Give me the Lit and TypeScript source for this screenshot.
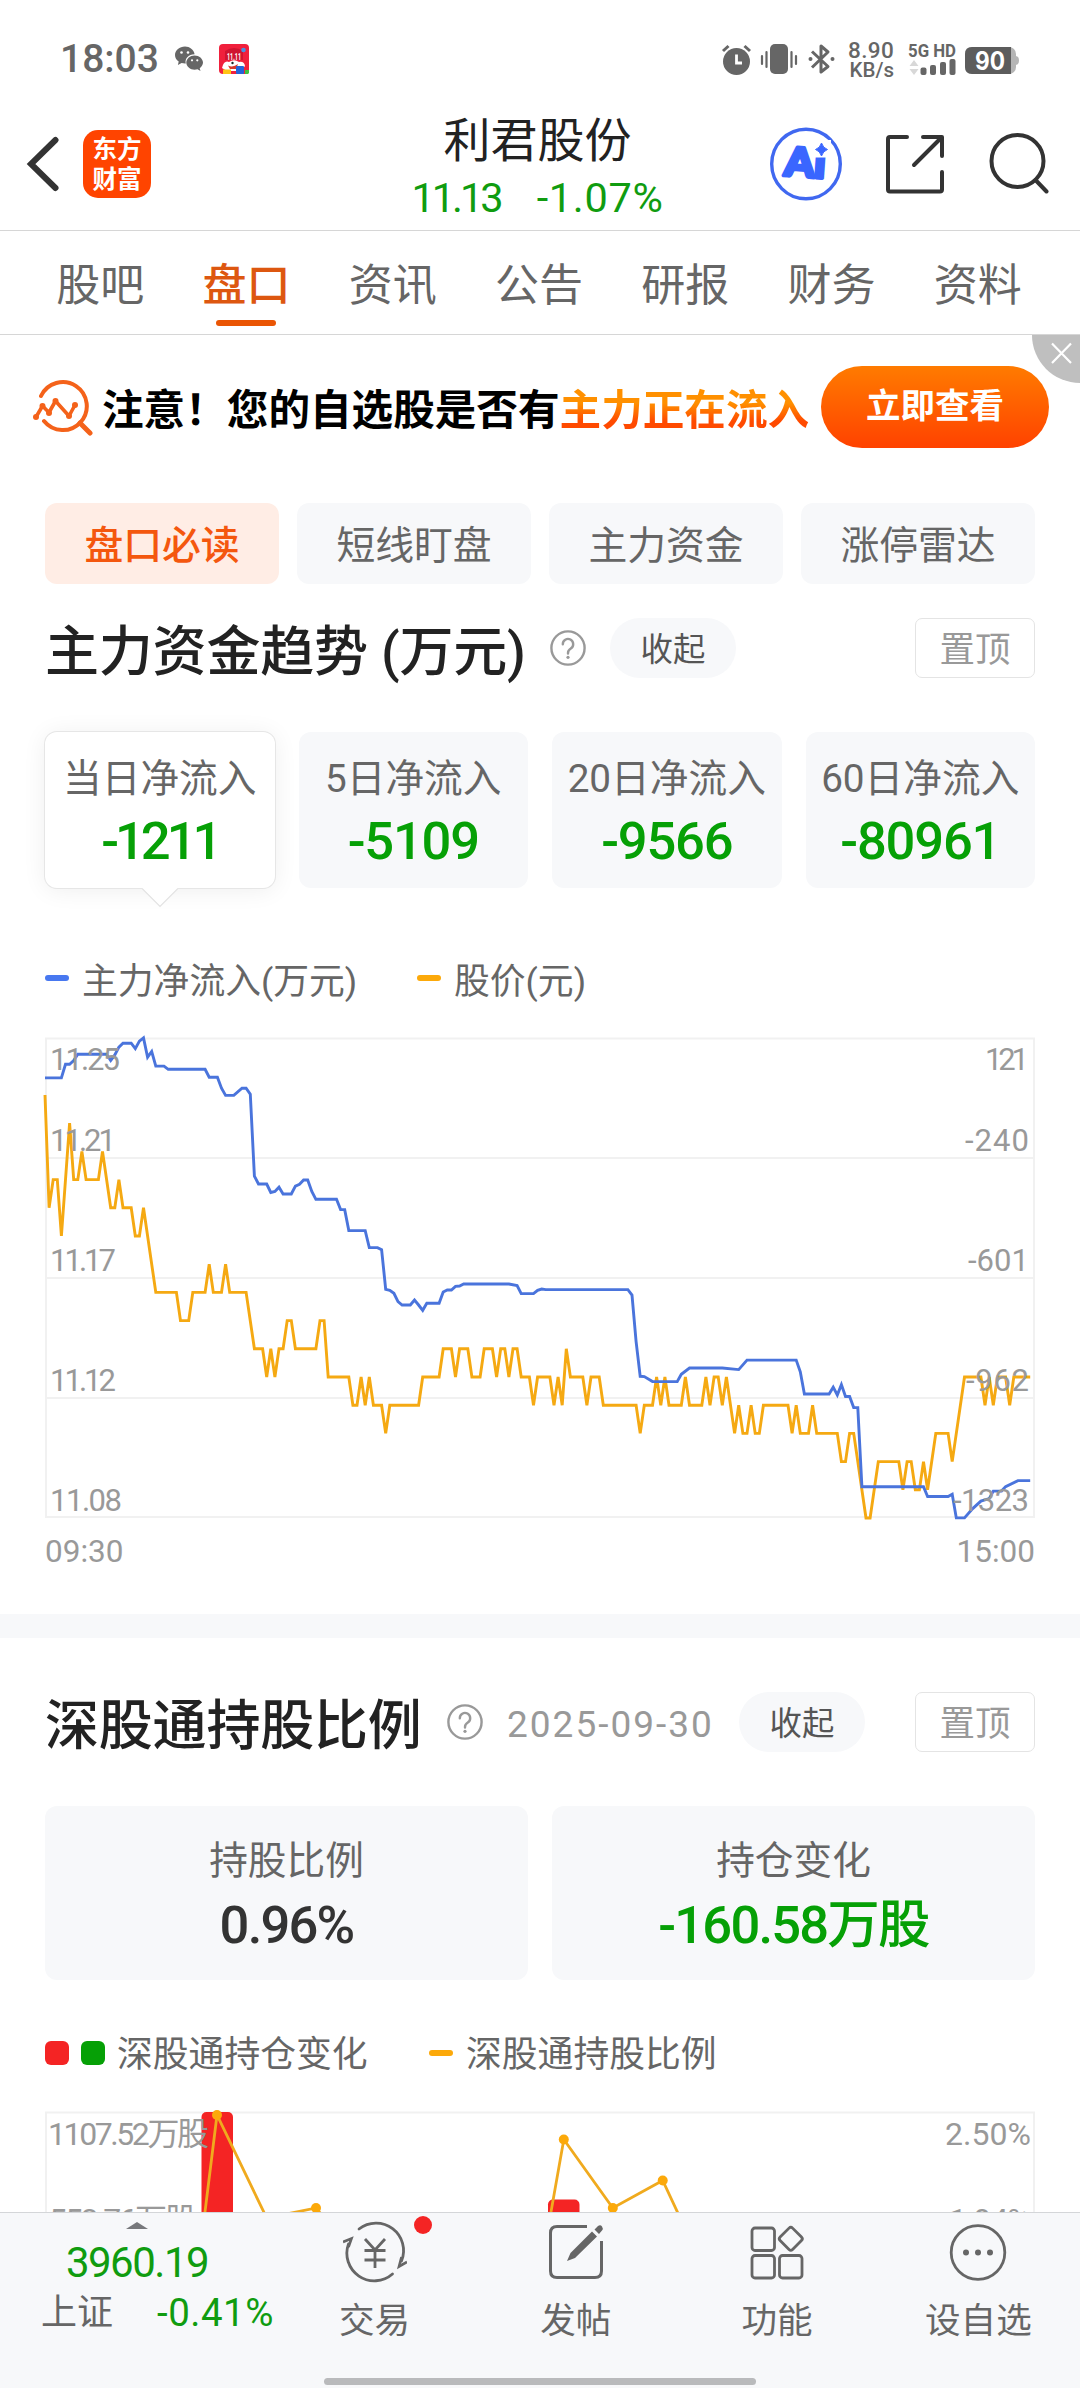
import { LitElement, html, svg, css } from "lit";
import { customElement } from "lit/decorators.js";
import { classMap } from "lit/directives/class-map.js";

/** [minute index, steps of 0.01 below 11.23] */
const PRICE: number[][] = [
  [0,0],[1,4],[2,3],[3,3],[4,5],[6,1],[7,3],[8,3],[9,2],[10,3],[13,3],[14,2],[16,4],[17,4],[18,3],[19,4],[21,4],[22,5],[23,5],[24,4],
  [27,7],[32,7],[33,8],[35,8],[36,7],[39,7],[40,6],[41,7],[43,7],[44,6],[45,7],[49,7],[51,9],[53,9],[54,10],[55,9],[56,10],[57,9],
  [58,9],[59,8],[60,8],[61,9],[66,9],[67,8],[68,8],[69,10],[74,10],[75,11],[76,11],[77,10],[78,11],[79,10],[80,11],[82,11],[83,12],
  [84,11],[91,11],[92,10],[96,10],[97,9],[99,9],[100,10],[101,9],[103,9],[104,10],[106,10],[107,9],[109,9],[110,10],[111,9],[112,9],
  [113,10],[114,9],[115,9],[116,10],[118,10],[119,11],[120,10],[123,10],[124,11],[125,10],[126,11],[127,9],[128,10],[131,10],
  [132,11],[133,10],[135,10],[136,11],[144,11],[145,12],[146,11],[148,11],[149,10],[150,11],[151,10],[152,11],[155,11],[156,10],
  [157,11],[160,11],[161,10],[162,11],[163,10],[164,10],[165,11],[166,10],[168,12],[169,11],[170,12],[171,12],[172,11],[173,12],
  [174,12],[175,11],[181,11],[182,12],[183,11],[184,12],[186,12],[187,11],[188,12],[193,12],[194,13],[195,13],[196,12],[197,12],
  [200,15],[201,15],[203,13],[208,13],[209,14],[210,13],[211,13],[212,14],[213,14],[214,13],[215,14],[217,12],[220,12],[221,13],
  [224,10],[228,10],[229,11],[230,10],[231,11],[232,10],[234,10],[235,11],[236,10],[240,10],
];

/** [minute index, distance below the top of the plot] */
const INFLOW: number[][] = [
  [0,39.3],[4,39.3],[5,25.7],[6,25.7],[7,22],[8,15.7],[15,15.7],[16,21.8],[17,16.4],[18,8.6],[19,4.6],[21,4.6],[22,10],[23,2.5],
  [24,-0.7],[25,18.6],[26,12.9],[27,27.5],[29,27.5],[30,30.7],[39,30.7],[40,38.6],[42,38.6],[43,49.6],[44,56.8],[46,56.8],[48,49.6],
  [49,49.6],[50,55.7],[51,137.5],[52,145.4],[54,145.4],[55,153.9],[56,152.9],[57,148.6],[58,155.4],[60,155.4],[61,147.5],[62,145.7],
  [63,141.4],[64,141.4],[65,152.9],[66,160.7],[71,160.7],[72,171],[73,171],[74,192],[78,192],[79,209],[81,209],[82,211],[83,250.7],
  [84,251.7],[85,254.7],[86,263],[87,266.4],[89,266.4],[90,261.4],[91,266.4],[92,271.7],[93,264.7],[96,264.7],[97,253.4],[98,251.4],
  [99,251.4],[100,247.7],[101,247.4],[102,245.4],[113,245.4],[115,247],[116,255],[119,255],[120,251.7],[121,250.4],[122,251],
  [142,251],[143,256.4],[144,303],[145,337.7],[146,338],[148,343],[154,343],[155,335.7],[157,329.4],[165,329.4],[169,331],
  [171,321.5],[183,321.5],[184,333.2],[185,355.4],[191,355.4],[192,348.6],[193,356.4],[194,346],[195,357.9],[196,357.9],[197,369],
  [198,369],[199,448.2],[214,448.2],[215,457.9],[220,457.9],[221,455.7],[222,479.3],[224,479.3],[226,470],[228,462.5],[230,460],
  [231,452.5],[233,452.5],[234,448],[237,442],[240,442],
];

const TOP = 5.6;
const line = (data: number[][], y: (v: number) => number) =>
  data.map(([i, v]) => `${(i * 4.105).toFixed(1)},${y(v).toFixed(1)}`).join(" ");

@customElement("flow-chart")
class FlowChart extends LitElement {
  static styles = css`
    :host { display: block; }
    svg { display: block; overflow: visible; }
    .grid { fill: none; stroke: #f1f1f1; stroke-width: 2; }
    .series { fill: none; stroke-width: 2.9; stroke-linejoin: miter; stroke-miterlimit: 3; }
    .price { stroke: #f5a912; }
    .flow { stroke: #4a74dc; }
    text { font: 31px Roboto, "Noto Sans CJK SC", sans-serif; fill: #999; }
    .axis { display: flex; justify-content: space-between; font: 31.5px/57px Roboto, sans-serif; color: #999; }
  `;
  render() {
    const rows = [37, 118, 238, 358, 478];
    const left: [string, number][] = [["11.25", 70], ["11.21", 66], ["11.17", 66], ["11.12", 66], ["11.08", 72]];
    const right: [string, number][] = [["121", 44], ["-240", 64], ["-601", 61], ["-962", 63], ["-1323", 76]];
    return html`
      <svg width="990" height="490" viewBox="0 0 990 490">
        <path class="grid" d="M1 5.6H989V484H1ZM1 125H989M1 245H989M1 365H989" />
        <polyline class="series price" points=${line(PRICE, (v) => TOP + 56.4 + v * 28.2)}></polyline>
        <polyline class="series flow" points=${line(INFLOW, (v) => TOP + v)}></polyline>
        ${rows.map((y, i) => svg`
          <text x="5" y=${y} textLength=${left[i][1]}>${left[i][0]}</text>
          <text x="984" y=${y} text-anchor="end" textLength=${right[i][1]}>${right[i][0]}</text>`)}
      </svg>
      <div class="axis"><span>09:30</span><span>15:00</span></div>
    `;
  }
}

@customElement("holding-chart")
class HoldingChart extends LitElement {
  static styles = css`
    :host { display: block; }
    svg { display: block; }
    .grid { fill: none; stroke: #f1f1f1; stroke-width: 2; }
    .bar { fill: #f42424; }
    .ratio { fill: none; stroke: #f0aa1e; stroke-width: 2.8; }
    .dot { fill: #fca90a; }
    text { font: 32px Roboto, "Noto Sans CJK SC", sans-serif; fill: #999; }
  `;
  render() {
    const dots = [[172, 9], [271, 102], [518.8, 33.5], [567.8, 102], [617.7, 74.5]];
    return html`
      <svg width="990" height="200" viewBox="0 0 990 200">
        <path class="grid" d="M1 200V6.5H989V200" />
        <rect class="bar" x="156.5" y="6" width="31.5" height="240" rx="5" />
        <rect class="bar" x="503" y="93.5" width="31.5" height="200" rx="5" />
        <polyline class="ratio" points="122.6,408 172,9 221.7,112 271,102 320,160" />
        <polyline class="ratio" points="469.4,313 518.8,33.5 567.8,102 617.7,74.5 667,180" />
        ${dots.map(([x, y]) => svg`<circle class="dot" cx=${x} cy=${y} r="5" />`)}
        <text x="3" y="39" textLength="161">1107.52万股</text>
        <text x="4" y="125" textLength="148">553.76万股</text>
        <text x="986" y="39" text-anchor="end" textLength="86">2.50%</text>
        <text x="986" y="125" text-anchor="end" textLength="82">1.94%</text>
      </svg>
    `;
  }
}

const help = html`<svg class="help" width="36" height="36" viewBox="0 0 36 36" fill="none" stroke="#999" stroke-width="2.4">
  <circle cx="18" cy="18" r="16.6" />
  <path d="M12.8 14.2a5.2 5.2 0 1 1 8 4.3c-1.9 1.2-2.8 2.1-2.8 4.4v.6" stroke-linecap="round" />
  <circle cx="18" cy="27.3" r="1.6" fill="#999" stroke="none" />
</svg>`;

@customElement("app-root")
class AppRoot extends LitElement {
  static styles = css`
    :host { display: block; }
    * { box-sizing: border-box; }
    svg { display: block; flex: none; }
    .page {
      width: 1080px; height: 2388px; overflow: hidden; background: #fff; color: #666;
      display: flex; flex-direction: column; white-space: nowrap;
      font-family: Roboto, "Noto Sans CJK SC", sans-serif;
    }
    .status { height: 97px; padding: 21px 61px 0 60px; display: flex; align-items: center; flex: none; }
    .time { font-size: 39px; font-weight: 500; line-height: 60px; width: 115px; }
    .status .jd { margin-left: 16px; }
    .tray { margin-left: auto; display: flex; align-items: center; }
    .rate { font-weight: 700; line-height: 20px; text-align: right; width: 46px; margin: 1px 0 0 13px; }
    .rate-n { font-size: 22.5px; letter-spacing: 0.4px; font-weight: 500; }
    .rate-u { font-size: 20.5px; font-weight: 500; }
    .net { margin-left: 14px; overflow: visible; }
    .battery { margin-left: 9px; margin-top: 3px; }

    .header { height: 134px; flex: none; border-bottom: 1.5px solid #d6d6d6; display: grid; grid-template-columns: 1fr auto 1fr; align-items: center; padding: 0 31px 0 26px; }
    .left { display: flex; align-items: center; gap: 23px; }
    .logo { width: 68px; height: 68px; border-radius: 15px; background: #ff4400; color: #fff; font-weight: 700; font-size: 24.5px; line-height: 30px; text-align: center; padding-top: 5px; }
    .title { padding-top: 11px; text-align: center; width: 260px; }
    .name { font-size: 47px; line-height: 57px; color: #222; }
    .quote { font-size: 41.5px; line-height: 57px; color: #109c10; display: flex; gap: 36px; justify-content: center; }
    .last { letter-spacing: -3px; }
    .pct { letter-spacing: 0.7px; }
    .right { display: flex; align-items: center; justify-content: flex-end; }
    .share { margin-left: 44px; }
    .find { margin-left: 45px; }

    .tabs { height: 104px; flex: none; border-bottom: 1.5px solid #d6d6d6; padding: 0 29px 0 27px; display: grid; grid-template-columns: repeat(7, 1fr); }
    .tab { text-align: center; font-size: 44px; line-height: 111px; height: 103px; position: relative; }
    .tab.on { color: #dd5710; font-weight: 500; }
    .tab.on::after { content: ""; position: absolute; left: 50%; top: 89px; width: 60px; margin-left: -30px; height: 6px; border-radius: 3px; background: #ea5504; }

    .banner { height: 168px; flex: none; position: relative; display: flex; align-items: flex-start; padding: 31px 31px 0 33px; }
    .banner .lens { margin-top: 13px; }
    .slogan { margin-left: 9px; font-size: 41.6px; line-height: 82px; padding-top: 4px; font-weight: 700; color: #000; }
    .hot { background: linear-gradient(#ff9000 35%, #ff4a00 72%); -webkit-background-clip: text; background-clip: text; color: transparent; }
    .look { margin-left: auto; width: 228px; height: 82px; border-radius: 41px; background: linear-gradient(#ff7b00, #ff4200); color: #fff; font-size: 34.5px; font-weight: 700; line-height: 81px; text-align: center; }
    .close { position: absolute; right: 0; top: 0; width: 48px; height: 48px; border-bottom-left-radius: 48px; background: #bfbfbf; }

    .wrap { padding: 0 45px; flex: none; }
    .chips { display: grid; grid-template-columns: repeat(4, 1fr); gap: 18px; }
    .chip { height: 81px; border-radius: 12px; background: #f7f8fa; text-align: center; font-size: 38.8px; line-height: 85px; }
    .chip.on { background: #ffede5; color: #f4570e; font-weight: 500; }

    .head { display: flex; align-items: center; height: 60px; margin-top: 34px; }
    .h { font-size: 54px; line-height: 60px; margin-top: 9px; color: #222; font-weight: 500; }
    .h1 { width: 505px; letter-spacing: -0.2px; }
    .h2 { width: 402px; letter-spacing: -0.2px; }
    .date { font-size: 37px; margin: 4px 0 0 24px; width: 232px; color: #999; letter-spacing: 2px; }
    .fold { width: 126px; height: 60px; border-radius: 30px; background: #f7f8fa; color: #555; font-size: 32.4px; line-height: 64px; text-align: center; margin-left: 24px; }
    .date + .fold { margin-left: 0; }
    .pin { margin-left: auto; width: 120px; height: 60px; border: 1.5px solid #e4e4e4; border-radius: 7px; color: #999; font-size: 35.5px; line-height: 63px; text-align: center; }

    .cards { display: grid; grid-template-columns: repeat(4, 1fr); gap: 24px; margin-top: 54px; }
    .card { position: relative; height: 156px; padding-top: 22px; border-radius: 12px; background: #f7f8fa; text-align: center; }
    .card.on { background: #fff; box-shadow: 0 0 0 1px #e6e6e6, 0 2px 24px rgba(0, 0, 0, 0.07); }
    .tip { position: absolute; left: 97px; top: 154.5px; }
    .label { font-size: 38.7px; line-height: 50px; }
    .value { font-size: 52.5px; line-height: 75px; font-weight: 500; color: #06a006; letter-spacing: -1.2px; }
    .card.on .value { letter-spacing: -4px; }
    .duo .dark { color: #333; letter-spacing: -0.6px; }

    .legend { display: flex; align-items: center; height: 60px; font-size: 35.8px; line-height: 60px; margin-top: 64px; }
    .item { display: flex; align-items: center; }
    .dash { width: 24px; height: 6px; border-radius: 3px; margin: 0 13px 8px 0; }
    .blue { background: #4878f0; }
    .amber { background: #fca90a; }
    .red { background: #f42424; }
    .green { background: #06a006; }
    .first { width: 372px; }
    flow-chart { margin-top: 21px; }
    .band { height: 24px; margin-top: 34px; background: #f7f8fa; flex: none; }

    .second .head { margin-top: 54px; }
    .duo { display: grid; grid-template-columns: 1fr 1fr; gap: 24px; margin-top: 54px; }
    .duo .card { height: 174px; padding-top: 28px; }
    .duo .label { line-height: 53px; }
    .duo .value { line-height: 77px; letter-spacing: -1.8px; }
    .second .legend { margin-top: 45px; }
    .second .first { width: 384px; }
    .second .dash { margin-bottom: 5px; }
    .sq { width: 24px; height: 24px; border-radius: 6px; margin: 0 12px 5px 0; }
    holding-chart { margin-top: 21px; }
    .scroll { flex: 1; min-height: 0; overflow: hidden; display: flex; flex-direction: column; }

    .bottom { height: 176px; flex: none; background: #f7f8fa; border-top: 1.5px solid #d4d6d9; display: grid; grid-template-columns: 274px repeat(4, 1fr) 1px; grid-template-rows: 165px 9px; }
    .index { display: flex; flex-direction: column; align-items: center; padding-top: 9px; }
    .level { font-size: 42px; line-height: 50px; color: #109c10; margin-top: 9px; letter-spacing: -1.5px; }
    .pair { display: flex; align-items: center; font-size: 36px; line-height: 50px; width: 100%; padding-left: 41px; gap: 44px; }
    .chg { font-size: 38.5px; color: #109c10; letter-spacing: 0.5px; }
    .nav { display: flex; flex-direction: column; align-items: center; padding-top: 7px; font-size: 35.6px; }
    .nav span { line-height: 50px; margin-top: 12px; }
    .ic { position: relative; width: 64px; height: 64px; }
    .badge { position: absolute; left: 71px; top: -4px; width: 18px; height: 18px; border-radius: 50%; background: #f42424; }
    .homebar { grid-column: 1 / -1; width: 432px; height: 7px; border-radius: 4px; background: #b9babc; justify-self: center; }
  `;

  render() {
    const tabs = ["股吧", "盘口", "资讯", "公告", "研报", "财务", "资料"];
    const chips = ["盘口必读", "短线盯盘", "主力资金", "涨停雷达"];
    const cards = [["当日净流入", "-1211"], ["5日净流入", "-5109"], ["20日净流入", "-9566"], ["60日净流入", "-80961"]];
    return html`
      <div class="page">
        <div class="status">
          <span class="time">18:03</span>
          <svg width="28" height="26" viewBox="0 0 28 26" fill="#666">
            <path d="M10 .5C4.500.5 0 4.300 0 9c0 2.700 1.400 5 3.700 6.600L2.900 19l3.700-1.900c1.200.3 2.200.5 3.400.5h.8C9.500 12.800 13.300 8.200 19.600 8.200 18.800 3.700 14.700.5 10 .5Z" />
            <path d="M28 16.600c0-4-3.900-7.200-8.400-7.200s-8.300 3.200-8.300 7.200 3.800 7.200 8.300 7.200c1 0 2-.2 2.900-.5l3 1.800-.8-2.900c2-1.400 3.300-3.400 3.300-5.600Z" />
            <g fill="#fff"><circle cx="6.500" cy="6.500" r="1.300" /><circle cx="13" cy="6.500" r="1.300" /><circle cx="17" cy="14.300" r="1.100" /><circle cx="22.300" cy="14.300" r="1.100" /></g>
          </svg>
          <svg class="jd" width="30" height="30" viewBox="0 0 30 30">
            <rect width="30" height="30" rx="4" fill="#f0203c" />
            <path d="M6 7Q15 1 24 7L24 16H6Z" fill="#cf1530" />
            <circle cx="24.500" cy="6" r="2.300" fill="#4a90e0" />
            <path d="M3 24Q5 16 10 18Q15 14.500 20 18Q25 17 26 22L22 27H8Z" fill="#fff" />
            <path d="M9 21.500Q14 24 19 20L17 25H11Z" fill="#d8382c" /><circle cx="13.500" cy="19" r="1.200" fill="#222" />
            <rect x="4" y="25.500" width="8" height="4.500" fill="#ffc414" /><rect x="17" y="22" width="8" height="8" rx="1" fill="#2464d8" /><path d="M26 26h4v3l-1 1h-3Z" fill="#3fc43f" />
            <text x="8" y="15.500" font-family="Roboto" font-size="9.500" font-weight="700" fill="#fff" textLength="14" lengthAdjust="spacingAndGlyphs">11.11</text>
          </svg>
          <div class="tray">
            <svg width="114" height="32" viewBox="0 0 114 32" fill="#666" stroke="#666">
              <g stroke="none"><circle cx="15.500" cy="18.500" r="13.500" /><path d="M2 8L7.500 3M29 8L23.500 3" stroke="#666" stroke-width="3" /></g>
              <path d="M15.500 11.500V20H21" fill="none" stroke="#fff" stroke-width="2.800" />
              <g stroke="none"><rect x="49" y="1" width="18" height="30" rx="5" /></g>
              <path d="M41 13v8M45.500 9v15M70.500 9v15M75 13v8" stroke-width="2.200" stroke-linecap="round" />
              <path d="M91 8.500L107 23.500L100 29V3L107 9L91 24.500" fill="none" stroke-width="3" stroke-linejoin="round" />
              <g stroke="none"><circle cx="89.500" cy="16" r="2" /><circle cx="111.500" cy="16" r="2" /></g>
            </svg>
            <div class="rate"><div class="rate-n">8.90</div><div class="rate-u">KB/s</div></div>
            <svg class="net" width="48" height="36" viewBox="0 0 48 36" fill="#666">
              <text x="0" y="15.500" font-family="Roboto" font-size="18" font-weight="700" textLength="48" lengthAdjust="spacingAndGlyphs">5G HD</text>
              <path d="M1.500 25l4.500-6 4.500 6ZM1.500 28l4.500 6 4.500-6Z" fill="#d8d8d8" />
              <rect x="12.500" y="26.500" width="6" height="7.500" rx="2" /><rect x="22" y="24" width="6" height="10" rx="2" /><rect x="32" y="21" width="6" height="13" rx="2" /><rect x="41.500" y="18" width="6" height="16" rx="2" />
            </svg>
            <svg class="battery" width="54" height="27" viewBox="0 0 54 27">
              <rect width="51" height="27" rx="7" fill="#b5b5b5" /><path d="M50 9q4 0 4 4.500t-4 4.500Z" fill="#b5b5b5" />
              <path d="M7 0H46V27H7Q0 27 0 20V7Q0 0 7 0Z" fill="#5c5c5c" />
              <text x="25" y="22.500" text-anchor="middle" font-family="Inter, Roboto" font-size="25" font-weight="700" fill="#fff" textLength="30" lengthAdjust="spacingAndGlyphs">90</text>
            </svg>
          </div>
        </div>

        <div class="header">
          <div class="left">
            <svg width="34" height="56" viewBox="0 0 34 56" fill="none" stroke="#333" stroke-width="6" stroke-linecap="round" stroke-linejoin="miter"><path d="M29.500 4L5 28L29.500 52" /></svg>
            <div class="logo">东方<br />财富</div>
          </div>
          <div class="title">
            <div class="name">利君股份</div>
            <div class="quote"><span class="last">11.13</span><span class="pct">-1.07%</span></div>
          </div>
          <div class="right">
            <svg width="72" height="74" viewBox="0 0 72 74">
              <ellipse cx="36" cy="37" rx="34.300" ry="34.800" fill="none" stroke="#4068f0" stroke-width="3.400" />
              <g transform="rotate(4 36 37)"><text x="14.500" y="50" font-family="Lato, Inter, sans-serif" font-size="40" font-weight="900" fill="#3a66ff" stroke="#3a66ff" stroke-width="3.600" stroke-linejoin="round" textLength="41" lengthAdjust="spacingAndGlyphs">Ai</text></g>
              <rect x="43" y="13" width="18" height="17.500" fill="#fff" />
              <path d="M51.500 16Q53 21 57.500 22.500Q53 24 51.500 29Q50 24 45.500 22.500Q50 21 51.500 16Z" fill="#3a66ff" stroke="#3a66ff" stroke-width="1" />
            </svg>
            <svg class="share" width="58" height="60" viewBox="0 0 58 60" fill="none" stroke="#333" stroke-width="4" stroke-linecap="round" stroke-linejoin="round">
              <path d="M21 3H4Q2 3 2 5V55.500Q2 57.500 4 57.500H54Q56 57.500 56 55.500V38M37 3H56V22M55 4L28 31" />
            </svg>
            <svg class="find" width="60" height="62" viewBox="0 0 60 62" fill="none" stroke="#333" stroke-width="4" stroke-linecap="round">
              <circle cx="28.500" cy="28" r="26" /><path d="M46.500 47L57.500 58.500" />
            </svg>
          </div>
        </div>

        <div class="tabs">${tabs.map((t, i) => html`<div class=${classMap({ tab: true, on: i === 1 })}>${t}</div>`)}</div>

        <div class="scroll">
          <div class="banner">
            <svg class="lens" width="60" height="58" viewBox="0 0 60 58" fill="none" stroke="#f4621a" stroke-width="4" stroke-linecap="round" stroke-linejoin="round">
              <path d="M8 17A24 24 0 1 1 11 42" /><path d="M47 44L57 54" stroke-width="5" />
              <path d="M3 38L9.500 27L16 33.500L22.500 22L36 37L42 26" stroke-width="3.600" />
              <g fill="#f4621a" stroke="none"><circle cx="3" cy="38" r="3" /><circle cx="9.500" cy="27" r="3" /><circle cx="16" cy="34" r="3" /><circle cx="22.500" cy="22" r="3" /><circle cx="36" cy="37" r="3" /><circle cx="42" cy="26" r="3" /></g>
            </svg>
            <div class="slogan">注意！您的自选股是否有<span class="hot">主力正在流入</span></div>
            <div class="look">立即查看</div>
            <div class="close"><svg width="48" height="48" viewBox="0 0 48 48" stroke="#fff" stroke-width="2.200"><path d="M20 8.500L39 28M39 8.500L20 28" /></svg></div>
          </div>

          <div class="wrap">
            <div class="chips">${chips.map((t, i) => html`<div class=${classMap({ chip: true, on: i === 0 })}>${t}</div>`)}</div>
            <div class="head"><div class="h h1">主力资金趋势 (万元)</div>${help}<div class="fold">收起</div><div class="pin">置顶</div></div>
            <div class="cards">
              ${cards.map(([l, v], i) => html`
                <div class=${classMap({ card: true, on: i === 0 })}>
                  <div class="label">${l}</div><div class="value">${v}</div>
                  ${i === 0 ? html`<svg class="tip" width="36" height="21" viewBox="0 0 36 21"><path d="M0 0L0 1.500L18 19.500L36 1.500V0Z" fill="#fff" /><path d="M0 1.500L18 19.500L36 1.500" fill="none" stroke="#e2e2e2" stroke-width="1.200" /></svg>` : ""}
                </div>`)}
            </div>
            <div class="legend">
              <div class="item first"><i class="dash blue"></i>主力净流入(万元)</div>
              <div class="item"><i class="dash amber"></i>股价(元)</div>
            </div>
            <flow-chart></flow-chart>
          </div>

          <div class="band"></div>

          <div class="wrap second">
            <div class="head"><div class="h h2">深股通持股比例</div>${help}<div class="date">2025-09-30</div><div class="fold">收起</div><div class="pin">置顶</div></div>
            <div class="duo">
              <div class="card"><div class="label">持股比例</div><div class="value dark">0.96%</div></div>
              <div class="card"><div class="label">持仓变化</div><div class="value">-160.58万股</div></div>
            </div>
            <div class="legend">
              <div class="item first"><i class="sq red"></i><i class="sq green"></i>深股通持仓变化</div>
              <div class="item"><i class="dash amber"></i>深股通持股比例</div>
            </div>
            <holding-chart></holding-chart>
          </div>
        </div>

        <div class="bottom">
          <div class="index">
            <svg width="22" height="7" viewBox="0 0 22 7"><path d="M0 7L11 0L22 7Z" fill="#77787c" /></svg>
            <div class="level">3960.19</div>
            <div class="pair"><span>上证</span><span class="chg">-0.41%</span></div>
          </div>
          <div class="nav">
            <div class="ic">
              <svg width="64" height="64" viewBox="0 0 64 64" fill="none" stroke="#666" stroke-width="2.800">
                <path d="M16 9A27.500 27.500 0 0 1 58.500 41M49.500 54A27.500 27.500 0 0 1 5.500 24" stroke-linecap="round" />
                <path d="M0 22L8.500 18.500L5.500 27M64 42L56 46.500L58.500 37" stroke-width="2.600" />
                <path d="M22 19L32 30L42 19M21.500 30.500H42.500M21.500 40H42.500M32 30V48" />
              </svg>
              <i class="badge"></i>
            </div><span>交易</span>
          </div>
          <div class="nav">
            <div class="ic">
              <svg width="64" height="64" viewBox="0 0 64 64" fill="none" stroke="#666" stroke-width="3">
                <path d="M43 6.500H13Q6.500 6.500 6.500 13V51Q6.500 57.500 13 57.500H51Q57.500 57.500 57.500 51V21" />
                <path d="M23 41L26.500 33L48 11.500L53 16.500L31 38ZM50.500 9.500L54 6Q56.500 4.500 58 6.500T58 10.500L55 14Z" fill="#666" stroke="none" />
              </svg>
            </div><span>发帖</span>
          </div>
          <div class="nav">
            <div class="ic">
              <svg width="64" height="64" viewBox="0 0 64 64" fill="none" stroke="#666" stroke-width="2.800">
                <rect x="7" y="8" width="22.500" height="22.500" rx="3" /><rect x="7" y="35.500" width="22.500" height="22.500" rx="3" /><rect x="34.500" y="35.500" width="22.500" height="22.500" rx="3" />
                <rect x="37" y="10" width="17.600" height="17.600" rx="2.500" transform="rotate(45 45.800 18.800)" />
              </svg>
            </div><span>功能</span>
          </div>
          <div class="nav">
            <div class="ic">
              <svg width="64" height="64" viewBox="0 0 64 64" fill="#666">
                <circle cx="32" cy="32.500" r="26.800" fill="none" stroke="#666" stroke-width="2.800" />
                <circle cx="20" cy="32.500" r="3" /><circle cx="32" cy="32.500" r="3" /><circle cx="44" cy="32.500" r="3" />
              </svg>
            </div><span>设自选</span>
          </div>
          <div class="homebar"></div>
        </div>
      </div>
    `;
  }
}
